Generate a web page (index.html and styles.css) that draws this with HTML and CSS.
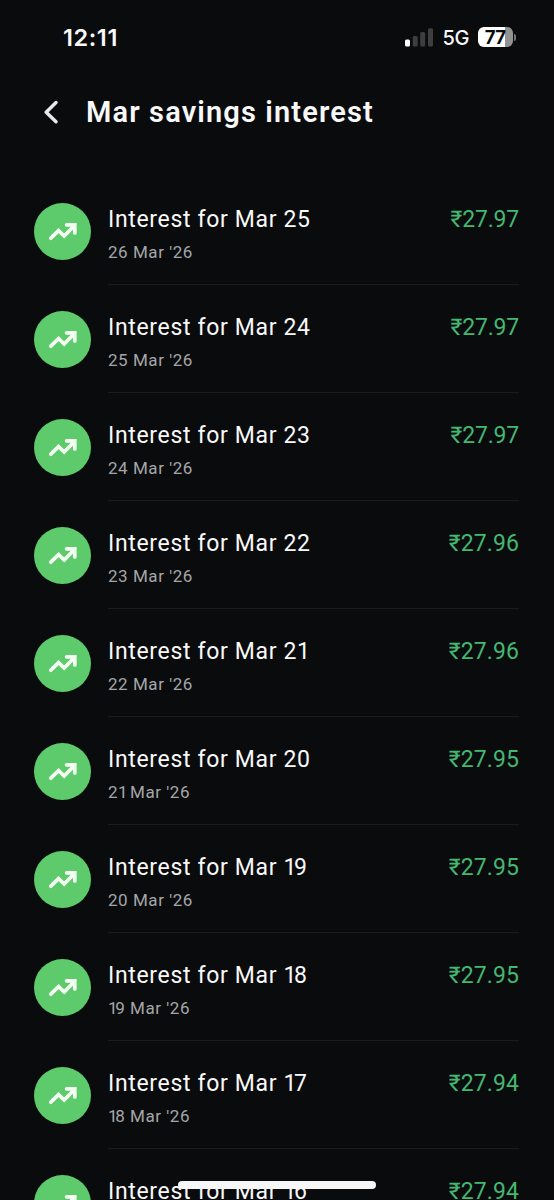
FILE: index.html
```html
<!DOCTYPE html>
<html lang="en">
<head>
<meta charset="utf-8">
<title>Mar savings interest</title>
<link rel="stylesheet" href="styles.css">
</head>
<body>
<div class="screen">
  <div class="status">
    <span class="clock">12:11</span>
    <div class="indicators">
      <svg class="signal" width="28" height="19" viewBox="0 0 28 19">
        <rect x="0" y="11.5" width="5" height="7" rx="1.5" fill="#fff"/>
        <rect x="7.7" y="8" width="5" height="10.5" rx="1.5" fill="#3d3e40"/>
        <rect x="15.2" y="4" width="5" height="14.5" rx="1.5" fill="#3d3e40"/>
        <rect x="23" y="0.3" width="5" height="18.2" rx="1.5" fill="#3d3e40"/>
      </svg>
      <span class="network">5G</span>
      <div class="battery"><span>77</span></div>
      <span class="battery-tip"></span>
    </div>
  </div>
  <header class="header">
    <svg class="back" width="16" height="24" viewBox="0 0 16 24"><path d="M13 2.5 3.2 12.3l9.8 9.5" fill="none" stroke="#e9e9ea" stroke-width="3.4" stroke-linecap="round" stroke-linejoin="round"/></svg>
    <h1>Mar savings interest</h1>
  </header>
  <main class="list" id="list"></main>
  <div class="home-bar"></div>
</div>
<script src="app.js"></script>
</body>
</html>
```

FILE: app.js
```js
const entries = [
  [25, '27.97'], [24, '27.97'], [23, '27.97'], [22, '27.96'], [21, '27.96'],
  [20, '27.95'], [19, '27.95'], [18, '27.95'], [17, '27.94'], [16, '27.94']
];
// The digit 1 is set on a narrower advance than the other figures.
const figures = n => String(n).replace(/1/g, '<span class="one">1</span>');
document.getElementById('list').innerHTML = entries.map(([day, amount]) => `
  <article class="row">
    <div class="badge">
      <svg width="30" height="20" viewBox="0 0 30 20"><path d="M2.8 16.2 10.6 8.6 16.2 14 26 4M18.6 2.8h8.2v8.2" fill="none" stroke="#f4fff2" stroke-width="3.7" stroke-linecap="round" stroke-linejoin="miter"/></svg>
    </div>
    <div class="details">
      <div class="text">
        <div class="name">Interest for Mar ${figures(day)}</div>
        <div class="date">${figures(day + 1)} Mar '26</div>
      </div>
      <div class="amount${amount.endsWith('97') ? ' tight' : ''}">₹${amount}</div>
    </div>
  </article>`).join('');
```

FILE: styles.css
```css
* { box-sizing: border-box; }
body { margin: 0; background: #0a0b0d; color: #f8f8f9; font-family: Roboto, sans-serif; }
.screen { position: relative; height: 1200px; overflow: hidden; }
.status { height: 76px; padding: 0 38px 2px 63px; display: flex; justify-content: space-between; align-items: center; }
.clock { padding-top: 1px; font: 600 23.5px/28px Inter, sans-serif; letter-spacing: .6px; }
.indicators { display: flex; align-items: center; }
.network { margin-left: 9px; padding-top: 1px; font: 500 20px/24px Inter, sans-serif; letter-spacing: -.4px; }
.battery { width: 35px; height: 20px; margin-left: 9px; padding-right: 1px; border-radius: 6px; background: linear-gradient(90deg, #fff 77%, #929293 77%); color: #0a0b0d; font: 700 18.5px/20px Inter, sans-serif; letter-spacing: -.8px; text-align: center; }
.battery-tip { width: 2px; height: 7px; margin-left: 1px; border-radius: 0 2px 2px 0; background: #747476; }
.header { height: 80px; padding: 0 43px 8px; display: flex; align-items: center; }
.back { flex: none; }
h1 { margin: 0 0 0 27px; font-size: 29px; font-weight: 600; line-height: 36px; letter-spacing: 1.13px; white-space: nowrap; }
.list { padding: 21px 35px 0 34px; }
.row { height: 108px; display: flex; }
.badge { flex: none; width: 57px; height: 57px; margin-top: 26px; border-radius: 50%; background: #5dcb6b; display: flex; align-items: center; justify-content: center; }
.details { flex: 1; margin-left: 17px; padding-top: 29px; border-bottom: 1px solid #1b1c1e; display: flex; justify-content: space-between; white-space: nowrap; }
.name { font-size: 23px; line-height: 28px; letter-spacing: .66px; }
.date { margin-top: 8px; font-size: 17px; line-height: 20px; letter-spacing: .55px; color: #a5a6a8; }
.one { letter-spacing: -2.4px; }
.amount { font-size: 23px; line-height: 28px; letter-spacing: .1px; color: #43b872; }
.amount.tight { letter-spacing: -.2px; }
.home-bar { position: absolute; left: 178px; top: 1181px; width: 198px; height: 8px; border-radius: 4px; background: #f7f7f7; }
```
